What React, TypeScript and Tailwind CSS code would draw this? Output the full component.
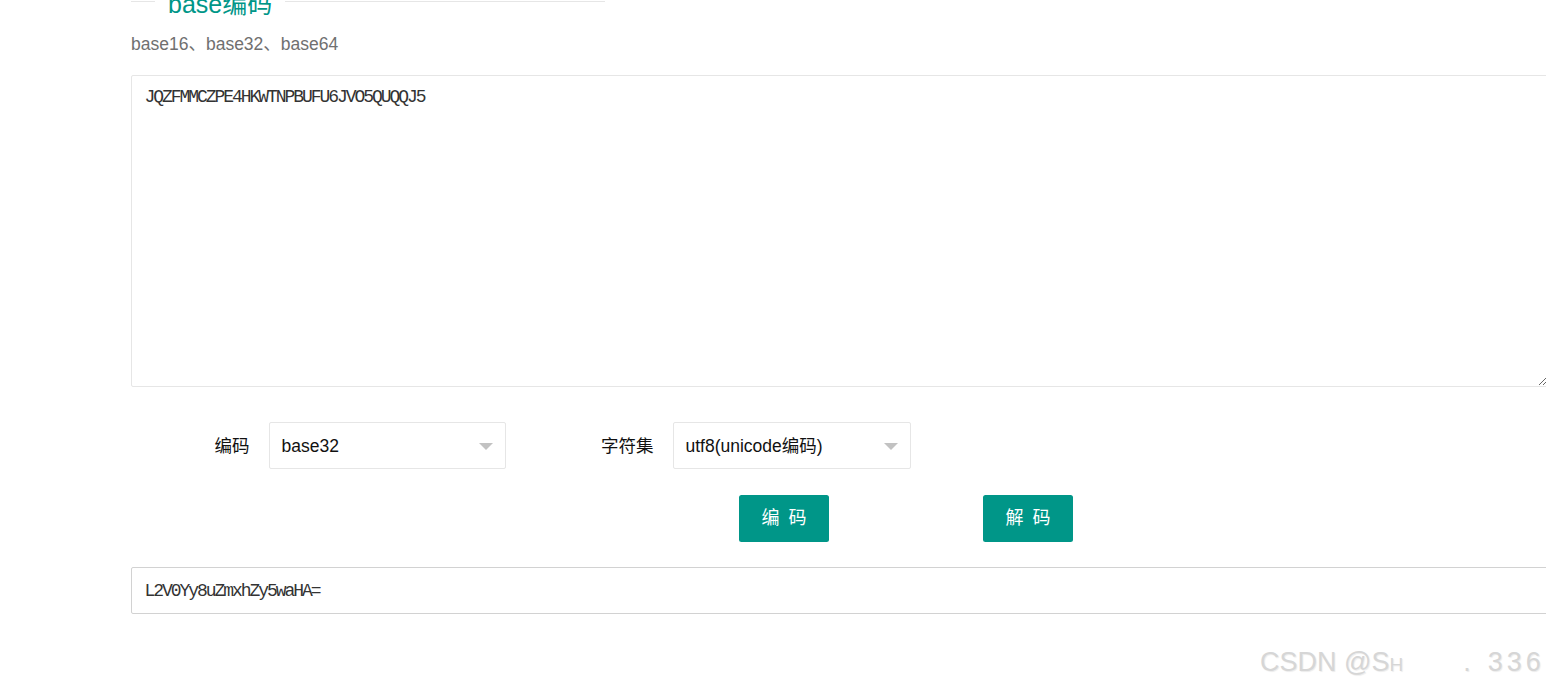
import React from "react";

const sans = "font-['Liberation_Sans','Noto_Sans_CJK_SC',sans-serif]";
const mono = "font-['Liberation_Mono','Noto_Sans_CJK_SC',monospace]";

function SelectBox({ value, width }: { value: string; width: string }) {
  return (
    <div
      className={`relative flex h-[47px] items-center rounded-[2px] border border-[#e6e6e6] bg-white pl-[12px] pt-[1px] text-[17.5px] text-[#111] ${width}`}
    >
      <span>{value}</span>
      <span className="absolute right-[12px] top-[20px] h-0 w-0 border-x-[7.5px] border-t-[7.5px] border-x-transparent border-t-[#c2c2c2]" />
    </div>
  );
}

function FormLabel({ text }: { text: string }) {
  return (
    <label className="w-[137.5px] pr-[19px] pt-[1px] text-right text-[17.5px] leading-[25px] text-[#111]">
      {text}
    </label>
  );
}

function TealButton({ chars }: { chars: string[] }) {
  return (
    <button className="flex h-[47px] w-[90px] items-center justify-center gap-[9px] rounded-[2.5px] bg-[#009688] text-[18px] text-white">
      {chars.map((c) => (
        <span key={c}>{c}</span>
      ))}
    </button>
  );
}

export default function App() {
  return (
    <div className={`relative h-[690px] w-[1546px] overflow-hidden bg-white ${sans}`}>
      <div className="pl-[131px]">
        {/* fieldset title */}
        <div className="-mt-[8px] flex w-[474px] items-start">
          <div className="mt-[9px] h-px w-[24px] bg-[#e6e6e6]" />
          <div className="px-[13px] text-[25px] leading-[25px] text-[#009688]">
            base编码
          </div>
          <div className="mt-[9px] h-px flex-1 bg-[#e6e6e6]" />
        </div>

        <div className="mt-[15px] text-[17.5px] leading-[25px] text-[#707070]">
          base16、base32、base64
        </div>

        <textarea
          readOnly
          defaultValue="JQZFMMCZPE4HKWTNPBUFU6JVO5QUQQJ5"
          className={`mt-[18px] block h-[312px] w-[1417px] rounded-[2px] border border-[#e6e6e6] px-[12.5px] pt-[9px] text-[18px] leading-[25px] tracking-[-2.05px] text-[#333] outline-none ${mono}`}
        />

        {/* options row */}
        <div className="mt-[35px] flex items-center">
          <FormLabel text="编码" />
          <SelectBox value="base32" width="w-[237px]" />
          <div className="w-[29.5px]" />
          <FormLabel text="字符集" />
          <SelectBox value="utf8(unicode编码)" width="w-[238px]" />
        </div>

        {/* buttons */}
        <div className="mt-[26px] flex gap-[154px] pl-[608px]">
          <TealButton chars={["编", "码"]} />
          <TealButton chars={["解", "码"]} />
        </div>

        <input
          readOnly
          value="L2V0Yy8uZmxhZy5waHA="
          className={`mt-[25px] block h-[47px] w-[1440px] rounded-[2px] border border-[#d2d2d2] px-[12.5px] text-[18px] tracking-[-2.05px] text-[#333] outline-none ${mono}`}
        />
      </div>

      {/* watermark */}
      <div className="absolute left-[1260px] top-[645px] flex items-baseline text-[27px] leading-[34px] text-[#d6d6d6] [text-shadow:1px_1px_1px_#ececec]">
        <span>CSDN @S</span>
        <span className="text-[19px]">H</span>
        <span className="ml-[60px]">.</span>
        <span className="ml-[17px] tracking-[4px]">336</span>
      </div>
    </div>
  );
}
